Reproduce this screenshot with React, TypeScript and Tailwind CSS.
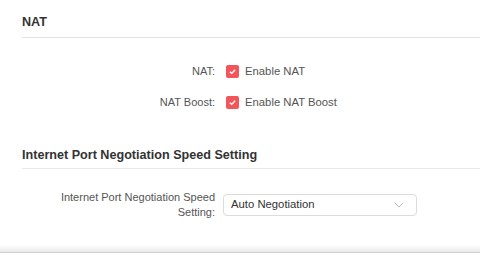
import { ChevronDown } from "lucide-react";

function Check({ label }: { label: string }) {
  return (
    <label className="flex items-center gap-[6px]">
      <span className="flex h-[13px] w-[13px] items-center justify-center rounded-[2px] bg-[#f2555a]">
        <svg viewBox="0 0 12 12" className="h-[9px] w-[9px]">
          <path d="M2.5 6.2 L5 8.5 L9.5 3.8" fill="none" stroke="white" strokeWidth="1.9" />
        </svg>
      </span>
      <span className="text-[#555]">{label}</span>
    </label>
  );
}

function Row({ label, children }: { label: React.ReactNode; children: React.ReactNode }) {
  return (
    <div className="flex items-center">
      <div className="w-[223px] pr-[8px] text-right text-[11px] leading-[15px] text-[#555]">{label}</div>
      {children}
    </div>
  );
}

export default function App() {
  return (
    <div
      className="h-[262px] w-[480px] overflow-hidden bg-white text-[11.3px]"
      style={{ fontFamily: '"Liberation Sans", Arial, sans-serif' }}
    >
      <section className="pl-[22px]">
        <h2 className="pt-[15px] pb-[7px] text-[12.6px] font-bold leading-[15px] text-[#333]">NAT</h2>
        <div className="h-px bg-[#e3e3e3]" />
      </section>
      <div className="flex flex-col gap-[14px] pt-[25px]">
        <Row label="NAT:">
          <div className="pl-[3px]"><Check label="Enable NAT" /></div>
        </Row>
        <Row label="NAT Boost:">
          <div className="pl-[3px]"><Check label="Enable NAT Boost" /></div>
        </Row>
      </div>
      <section className="pl-[22px] pt-[37px]">
        <h2 className="pb-[5px] text-[12.6px] font-bold leading-[15px] text-[#333]">
          Internet Port Negotiation Speed Setting
        </h2>
        <div className="h-px bg-[#e8e8e8]" />
      </section>
      <div className="pt-[21px]">
        <Row
          label={
            <>
              Internet Port Negotiation Speed
              <br />
              Setting:
            </>
          }
        >
          <div className="flex h-[22px] w-[194px] items-center justify-between rounded-[4px] border border-[#dcdcdc] px-[7px] text-[#333]">
            <span>Auto Negotiation</span>
            <ChevronDown className="mr-[2px] h-[16px] w-[16px] text-[#b5b5b5]" strokeWidth={1.4} />
          </div>
        </Row>
      </div>
      <div className="mt-[25px] h-[7px] bg-gradient-to-b from-white to-[#e9e9e9]" />
      <div className="h-px bg-[#d0d0d0]" />
    </div>
  );
}
